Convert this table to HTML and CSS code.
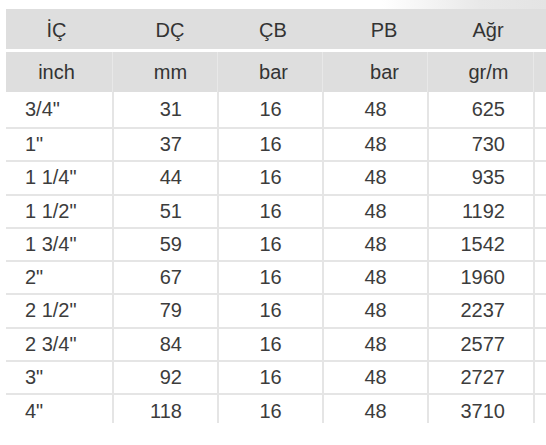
FILE: index.html
```html
<!DOCTYPE html>
<html lang="tr">
<head>
<meta charset="utf-8">
<title>Tablo</title>
<link rel="stylesheet" href="styles.css">
</head>
<body>
<div class="page">
  <div class="topstrip"></div>
  <div class="table">
    <div class="row head">
      <div class="c c1">İÇ</div><div class="c c2">DÇ</div><div class="c c3">ÇB</div><div class="c c4">PB</div><div class="c c5">Ağr</div><div class="c c6"></div>
    </div>
    <div class="row head unit">
      <div class="c c1">inch</div><div class="c c2">mm</div><div class="c c3">bar</div><div class="c c4">bar</div><div class="c c5">gr/m</div><div class="c c6"></div>
    </div>
    <div class="body">
      <div class="row data first"><div class="c c1">3/4"</div><div class="c c2">31</div><div class="c c3">16</div><div class="c c4">48</div><div class="c c5">625</div><div class="c c6"></div></div>
      <div class="row data"><div class="c c1">1"</div><div class="c c2">37</div><div class="c c3">16</div><div class="c c4">48</div><div class="c c5">730</div><div class="c c6"></div></div>
      <div class="row data"><div class="c c1">1 1/4"</div><div class="c c2">44</div><div class="c c3">16</div><div class="c c4">48</div><div class="c c5">935</div><div class="c c6"></div></div>
      <div class="row data"><div class="c c1">1 1/2"</div><div class="c c2">51</div><div class="c c3">16</div><div class="c c4">48</div><div class="c c5">1192</div><div class="c c6"></div></div>
      <div class="row data"><div class="c c1">1 3/4"</div><div class="c c2">59</div><div class="c c3">16</div><div class="c c4">48</div><div class="c c5">1542</div><div class="c c6"></div></div>
      <div class="row data"><div class="c c1">2"</div><div class="c c2">67</div><div class="c c3">16</div><div class="c c4">48</div><div class="c c5">1960</div><div class="c c6"></div></div>
      <div class="row data"><div class="c c1">2 1/2"</div><div class="c c2">79</div><div class="c c3">16</div><div class="c c4">48</div><div class="c c5">2237</div><div class="c c6"></div></div>
      <div class="row data"><div class="c c1">2 3/4"</div><div class="c c2">84</div><div class="c c3">16</div><div class="c c4">48</div><div class="c c5">2577</div><div class="c c6"></div></div>
      <div class="row data"><div class="c c1">3"</div><div class="c c2">92</div><div class="c c3">16</div><div class="c c4">48</div><div class="c c5">2727</div><div class="c c6"></div></div>
      <div class="row data last"><div class="c c1">4"</div><div class="c c2">118</div><div class="c c3">16</div><div class="c c4">48</div><div class="c c5">3710</div><div class="c c6"></div></div>
    </div>
  </div>
</div>
</body>
</html>
```

FILE: styles.css
```css
* { box-sizing: border-box; }
html, body { margin: 0; padding: 0; background: #ffffff; }
body { width: 546px; height: 445px; overflow: hidden; font-family: "Liberation Sans", Arial, sans-serif; color: #3c3c3c; }

.page { width: 546px; }

.topstrip {
  height: 9px;
  background: linear-gradient(to right, rgba(255,255,255,0) 0%, rgba(255,255,255,0) 70%, #e8e8e8 88%, #e4e4e4 100%);
}

.table { margin-left: 6px; width: 560px; }

.row {
  display: grid;
  grid-template-columns: 106px 105px 105px 105px 106px 33px;
  font-size: 20px;
}

.c { display: flex; align-items: center; white-space: nowrap; }

.head { background: #dedede; height: 40px; color: #333333; }
.head .c { justify-content: center; padding-top: 3px; }
.head .c2 { padding-left: 11px; }
.head .c3 { padding-left: 7px; }
.head .c4 { padding-left: 19px; }
.head .c5 { padding-left: 16px; }
.head .c1 { padding-right: 5px; }
.unit { margin-top: 3px; }
.unit .c { border-left: 1px solid #e8e8e8; padding-top: 0; }
.unit .c1 { border-left: none; }

.data { height: 33.25px; border-top: 2px solid #e5e5e5; }
.data.first { height: 35px; border-top: none; }
.data.last { height: 28px; align-items: start; }
.data.last .c { height: 28px; padding-top: 4px; }

.data .c { border-left: 2px solid #e5e5e5; }
.data .c1 { border-left: none; padding-left: 19px; }
.data .c2 { justify-content: flex-end; padding-right: 35px; }
.data .c3 { justify-content: center; }
.data .c4 { justify-content: center; }
.data .c5 { justify-content: flex-end; padding-right: 28px; }
```
